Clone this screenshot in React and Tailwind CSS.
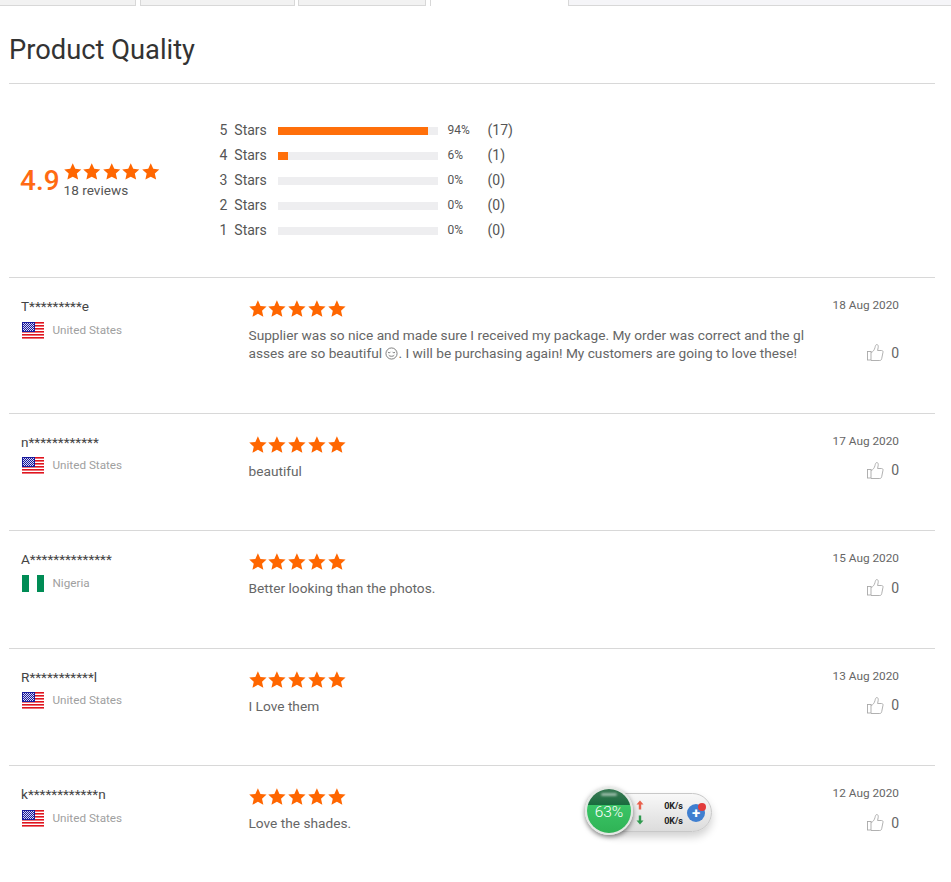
const STAR_PATH = 'M12 1.5l3.1 6.9 7.4.8-5.5 5 1.6 7.4L12 18l-6.6 3.6 1.6-7.4-5.5-5 7.4-.8z';

const BARS = [
  { label: 5, pct: 94, count: 17 },
  { label: 4, pct: 6, count: 1 },
  { label: 3, pct: 0, count: 0 },
  { label: 2, pct: 0, count: 0 },
  { label: 1, pct: 0, count: 0 },
];

const REVIEWS = [
  { name: 'T*********e', country: 'United States', flag: 'us', date: '18 Aug 2020', h: 'h-[135.75px]', lines: 2 },
  { name: 'n************', country: 'United States', flag: 'us', date: '17 Aug 2020', h: 'h-[117.5px]', lines: 1, text: 'beautiful' },
  { name: 'A**************', country: 'Nigeria', flag: 'ng', date: '15 Aug 2020', h: 'h-[117.5px]', lines: 1, text: 'Better looking than the photos.' },
  { name: 'R***********l', country: 'United States', flag: 'us', date: '13 Aug 2020', h: 'h-[117.5px]', lines: 1, text: 'I Love them' },
  { name: 'k************n', country: 'United States', flag: 'us', date: '12 Aug 2020', h: 'h-[116px]', lines: 1, text: 'Love the shades.' },
];

function Star({ size }) {
  return (
    <svg width={size} height={size} viewBox="0 0 24 24" className="shrink-0">
      <path d={STAR_PATH} fill="#ff6600" />
    </svg>
  );
}

function Stars({ size }) {
  return (
    <div className="flex">
      {[0, 1, 2, 3, 4].map((i) => <Star key={i} size={size} />)}
    </div>
  );
}

function UsFlag() {
  return (
    <svg width="22" height="17" viewBox="0 0 22 17" className="shrink-0">
      <rect width="22" height="17" fill="#fff" />
      {[0, 3, 6, 9, 12, 15].map((y) => <rect key={y} y={y} width="22" height="1.6" fill="#e0141e" />)}
      <rect width="13" height="10" fill="#1a1a9c" />
      {[1, 3, 5, 7].map((y) => [1, 3, 5, 7, 9, 11].map((x) => <rect key={`${x}-${y}`} x={x} y={y} width="1" height="1" fill="#d8d8f4" />))}
      {[2, 4, 6, 8].map((y) => [2, 4, 6, 8, 10].map((x) => <rect key={`${x}-${y}`} x={x} y={y} width="1" height="1" fill="#d8d8f4" />))}
    </svg>
  );
}

function NgFlag() {
  return (
    <div className="flex h-[17px] w-[22px] shrink-0">
      <div className="flex-1 bg-[#008c55]" />
      <div className="flex-1 bg-white" />
      <div className="flex-1 bg-[#008c55]" />
    </div>
  );
}

function Thumb() {
  return (
    <svg width="17" height="17" viewBox="0 0 17 17" fill="none" stroke="#a8a8a8" strokeWidth="0.9" className="shrink-0">
      <rect x="0.5" y="7.5" width="3.5" height="8.5" />
      <path d="M4 8.5c2 -.6 3.4 -2.5 4 -5 .3 -1.4 .8 -3 1.8 -3 1.2 0 1.6 1.4 1.4 2.8l-.6 3.2h4c1 0 1.6 .8 1.4 1.7l-1.3 6.5c-.2 1 -.8 1.8 -1.9 1.8H4" />
    </svg>
  );
}

// the heart-eyes emoji renders as a plain outline in the picture
function OutlineSmiley() {
  return (
    <svg width="13" height="13" viewBox="0 0 14 14" fill="none" stroke="#666" strokeWidth="0.9" className="inline-block align-[-2px]">
      <circle cx="7" cy="7" r="6" />
      <path d="M3.2 5.2l1.3 1.4 1.3-1.4M8.2 5.2l1.3 1.4 1.3-1.4" />
      <path d="M4 8.8c.8 1.6 5.2 1.6 6 0" />
    </svg>
  );
}

function ReviewText({ review }) {
  if (review.lines === 1) {
    return <div className="whitespace-nowrap">{review.text}</div>;
  }
  return (
    <>
      <div className="whitespace-nowrap">Supplier was so nice and made sure I received my package. My order was correct and the gl</div>
      <div className="whitespace-nowrap">asses are so beautiful <OutlineSmiley />. I will be purchasing again! My customers are going to love these!</div>
    </>
  );
}

function ReviewRow({ review }) {
  return (
    <div className={`flex border-t border-[#d8d8d8] ${review.h}`}>
      <div className="w-[239px] shrink-0 pl-3 pt-[20px]">
        <div className="text-[13.6px] leading-[16px] text-[#444]">{review.name}</div>
        <div className="mt-[7.5px] flex items-center pl-px">
          {review.flag === 'us' ? <UsFlag /> : <NgFlag />}
          <span className="ml-[8.5px] text-[11.7px] leading-[17px] text-[#a0a0a0]">{review.country}</span>
        </div>
      </div>
      <div className="w-[572px] shrink-0 pt-[21px]">
        <div className="-ml-[0.5px]">
          <Stars size={19.8} />
        </div>
        <div className="ml-[0.5px] mt-[7px] text-[13.7px] leading-[18px] text-[#666]">
          <ReviewText review={review} />
        </div>
      </div>
      <div className="flex w-[79px] shrink-0 flex-col items-end pt-[20px]">
        <div className="whitespace-nowrap text-[11.8px] leading-[15px] text-[#666]">{review.date}</div>
        <div className={`flex items-center gap-[7px] ${review.lines === 2 ? 'mt-[31px]' : 'mt-[13px]'}`}>
          <Thumb />
          <span className="text-[14px] leading-[16px] text-[#666]">0</span>
        </div>
      </div>
    </div>
  );
}

function SpeedWidget() {
  return (
    <div className="absolute left-[585px] top-[787px] h-[50px] w-[128px]">
      <div className="absolute left-[16px] top-[6px] h-[39px] w-[111px] rounded-full border border-[#c8c8c8] bg-gradient-to-b from-[#f8f8f8] to-[#dcdcdc] shadow-[0_5px_8px_rgba(0,0,0,0.18)]" />
      <div className="absolute left-0 top-0 flex h-[48px] w-[48px] flex-col overflow-hidden rounded-full border-[2px] border-[#e4e8e4] shadow-[0_2px_5px_rgba(0,0,0,0.5)]">
        <div className="relative h-[16px] bg-gradient-to-b from-[#3a7a55] to-[#186b3e]">
          <div className="absolute left-[14px] top-[4px] h-[3px] w-[16px] rounded-full bg-white/50 blur-[1px]" />
        </div>
        <div className="flex flex-1 justify-center bg-gradient-to-b from-[#3ac466] to-[#2fb355] text-[15.5px] font-light leading-[14px] text-white">63%</div>
      </div>
      <svg width="8" height="10" viewBox="0 0 8 10" className="absolute left-[51px] top-[13px]">
        <path d="M4 0.5L7.5 4.5H5.2V9.5H2.8V4.5H0.5z" fill="#e8604c" />
      </svg>
      <svg width="8" height="10" viewBox="0 0 8 10" className="absolute left-[51px] top-[28px]">
        <path d="M4 9.5L7.5 5.5H5.2V0.5H2.8V5.5H0.5z" fill="#2f9a4f" />
      </svg>
      <div className="absolute right-[30px] top-[14px] text-[9px] font-bold leading-[11px] text-[#222]">0K/s</div>
      <div className="absolute right-[30px] top-[29px] text-[9px] font-bold leading-[11px] text-[#222]">0K/s</div>
      <div className="absolute left-[102px] top-[17px] flex h-[18px] w-[18px] items-center justify-center rounded-full bg-[#3f7fd0] text-[15px] font-bold leading-none text-white">+</div>
      <div className="absolute left-[113px] top-[16px] h-[8px] w-[8px] rounded-full bg-[#e23b3b]" />
    </div>
  );
}

export default function App() {
  return (
    <div className="relative h-[882px] w-[951px] overflow-hidden bg-white font-['Roboto',sans-serif]">
      {/* Tabs */}
      <div className="flex h-[6px] items-stretch">
        <div className="w-[136px] border-b border-r border-[#d8d8d8] bg-[#f2f2f2]" />
        <div className="ml-[4px] w-[155px] border-x border-b border-[#d8d8d8] bg-[#f2f2f2]" />
        <div className="ml-[3px] w-[128px] border-x border-b border-[#d8d8d8] bg-[#f2f2f2]" />
        <div className="ml-[4px] w-[1px] bg-[#d8d8d8]" />
        <div className="w-[137px] bg-white" />
        <div className="flex-1 border-b border-l border-[#d8d8d8] bg-[#f5f5f8]" />
      </div>

      <div className="pl-[9px] pr-[16px]">
        <h1 className="flex h-[78px] items-center border-b border-[#d8d8d8] pt-[11px] text-[27.3px] font-normal text-[#333]">
          Product Quality
        </h1>

        {/* Summary */}
        <div className="flex h-[193px] pt-[34px]">
          <div className="flex w-[210.5px] shrink-0 pl-[11px] pt-[47px]">
            <div className="text-[28px] font-medium leading-[32px] text-[#ff6a13]">4.9</div>
            <div className="ml-[4px] -mt-[3px]">
              <div className="-ml-[1px]">
                <Stars size={19.5} />
              </div>
              <div className="text-[13.6px] leading-[16px] text-[#555]">18 reviews</div>
            </div>
          </div>
          <div className="flex flex-col">
            {BARS.map((bar) => (
              <div key={bar.label} className="flex h-[25px] items-center text-[#555]">
                <span className="w-[58.5px] whitespace-nowrap text-[14px] leading-[25px]">{bar.label}&nbsp; Stars</span>
                <div className="h-[8px] w-[160px] bg-[#eeeef0]">
                  <div className="h-full bg-[#ff6f0a]" style={{ width: `${bar.pct}%` }} />
                </div>
                <span className="ml-[9.5px] w-[40px] text-[12px] leading-[25px]">{bar.pct}%</span>
                <span className="text-[14px] leading-[25px]">({bar.count})</span>
              </div>
            ))}
          </div>
        </div>

        {REVIEWS.map((review) => <ReviewRow key={review.date} review={review} />)}
      </div>

      <SpeedWidget />
    </div>
  );
}
